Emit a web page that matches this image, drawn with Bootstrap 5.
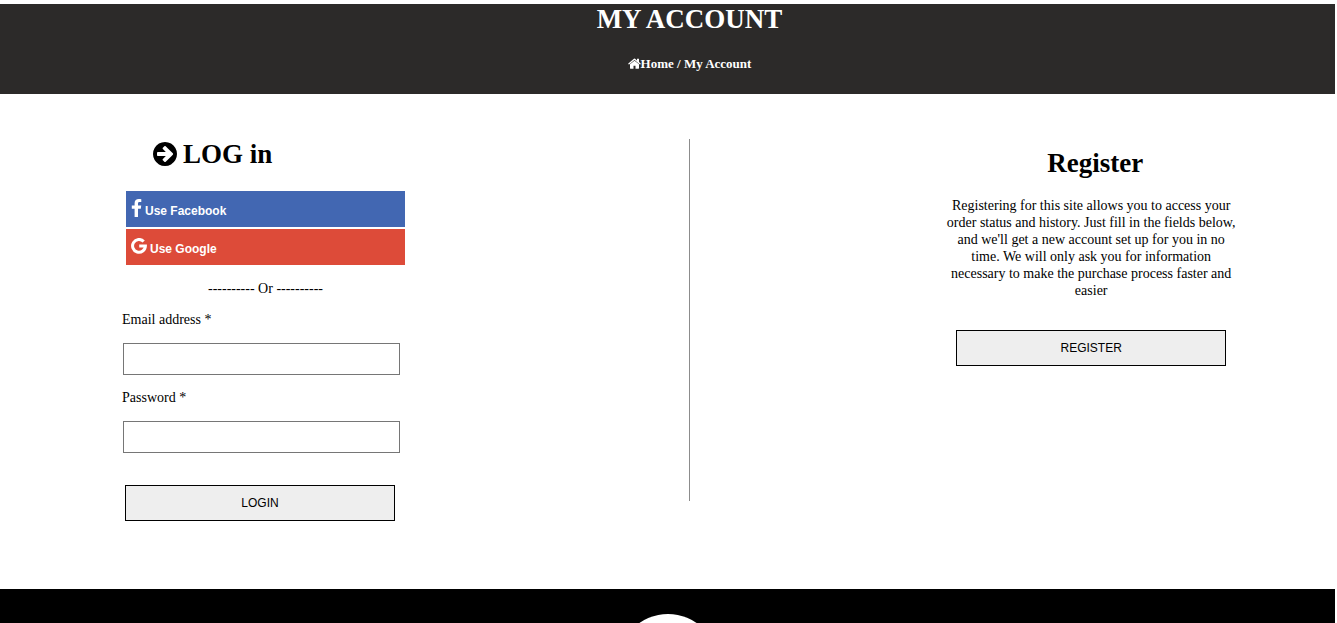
<!DOCTYPE html>
<html lang="en">
<head>
<meta charset="utf-8">
<meta name="viewport" content="width=device-width, initial-scale=1">
<title>My Account</title>
<link href="https://cdn.jsdelivr.net/npm/bootstrap@5.3.0/dist/css/bootstrap.min.css" rel="stylesheet">
<style>
  body { font-family: "Liberation Serif", "Times New Roman", serif; font-size: 14px; line-height: 17px; color: #000; background: #fff; padding: 4px 2px 0 0; }
  h1, h2 { font-size: 27px; line-height: 31px; font-weight: 700; margin: 0; }
  .page-banner { background: #2c2a29; height: 90px; padding-left: 44px; }
  .crumbs { font-size: 13px; margin-top: 20px; }
  .crumbs a { color: #fff; }
  .account-area { padding-top: 45px; min-height: 495px; }
  .login-side { flex: 0 0 52%; padding-left: 122px; padding-right: 24px; }
  .login-form { width: 283px; }
  .login-title { margin-left: 31px; margin-bottom: 21px; gap: 6px; }
  .login-title svg { margin-bottom: 2px; }
  .divider-line { width: 1px; height: 362px; background: #8c8c8c; margin-left: -5px; }
  .register-box { width: 298px; margin-left: 252px; padding-top: 9px; }
  .register-box h2 { padding-left: 8px; }
  .register-text { margin: 18px 0 31px; padding: 0 3px; }
  .btn-social, .btn-box { font-family: "Liberation Sans", Arial, sans-serif; font-size: 12px; line-height: 16px; border-radius: 0; height: 36px; }
  .btn-social { color: #fff; font-weight: 700; border: 0; text-align: left; padding: 4px 5px 0; margin: 0 0 2px 4px; width: 279px; gap: 3px; }
  .btn-social:hover { color: #fff; }
  .btn-facebook, .btn-facebook:hover { background: #4267b2; }
  .btn-google, .btn-google:hover { background: #dd4b39; }
  .btn-social svg { margin-top: -6px; }
  .btn-box { background: #eee; border: 1px solid #000; color: #000; padding: 0; width: 270px; }
  .login-button { margin: 18px 0 0 3px; }
  .or-line { margin: 15px 0 14px; padding-left: 4px; }
  .field { width: 277px; height: 32px; border: 1px solid #767676; border-radius: 0; margin: 15px 0 14px 1px; padding: 0 4px; }
  .site-footer { background: #000; min-height: 0; padding-top: 25px; }
  .footer-disc { width: 100px; height: 100px; background: #fff; }
</style>
</head>
<body class="vh-100 d-flex flex-column overflow-hidden">
<header class="page-banner text-white text-center flex-shrink-0">
  <h1>MY ACCOUNT</h1>
  <nav class="crumbs fw-bold d-flex justify-content-center align-items-center" aria-label="Breadcrumb">
    <a href="#" class="text-decoration-none d-flex align-items-center"><svg width="13" height="11" viewBox="0 0 1664 1312" fill="currentColor" aria-hidden="true"><path d="M1408 768v480q0 26-19 45t-45 19H960V928H704v384H320q-26 0-45-19t-19-45V768q0-1 .5-3t.5-3l575-474 575 474q1 2 1 6zm223-69-62 74q-8 9-21 11h-3q-13 0-21-7L832 200 140 777q-12 8-24 7-13-2-21-11l-62-74q-8-10-7-23.500t11-21.500l719-599q32-26 76-26t76 26l244 204V64q0-14 9-23t23-9h192q14 0 23 9t9 23v408l219 182q10 8 11 21.500t-7 23.500z"/></svg>Home</a><span>&nbsp;/ My Account</span>
  </nav>
</header>
<main class="account-area d-flex flex-shrink-0">
  <section class="login-side">
    <form class="login-form">
      <h2 class="login-title d-flex align-items-center"><svg width="24" height="24" viewBox="0 0 1536 1536" aria-hidden="true"><path d="M1285 768q0-27-18-45L905 361l-91-91q-18-18-45-18t-45 18l-91 91q-18 18-18 45t18 45l189 189H320q-26 0-45 19t-19 45v128q0 26 19 45t45 19h502l-189 189q-19 19-19 45t19 45l91 91q18 18 45 18t45-18l362-362 91-91q18-18 18-46zm251 0q0 209-103 385.500T1153.500 1433 768 1536t-385.500-103T103 1153.500 0 768t103-385.500T382.500 103 768 0t385.500 103T1433 382.500 1536 768z"/></svg><span>LOG in</span></h2>
      <button type="button" class="btn btn-social btn-facebook d-flex align-items-center"><svg width="11" height="18" viewBox="0 0 11 18" fill="#fff" aria-hidden="true"><path d="M10.300.2v2.900H8.600c-1.300 0-1.600.6-1.600 1.500v2h3.200l-.4 3.200H7V18H3.600V9.800H.8V6.600h2.800V4.200C3.600 1.400 5.300 0 7.800 0c1.200 0 2.200.1 2.500.2z"/></svg><span>Use Facebook</span></button>
      <button type="button" class="btn btn-social btn-google d-flex align-items-center"><svg width="16" height="16" viewBox="0 0 16 16" fill="none" stroke="#fff" stroke-width="3" aria-hidden="true"><path d="M12.700 3.500A6.400 6.400 0 1 0 14.400 8V7.900H8.200"/></svg><span>Use Google</span></button>
      <p class="or-line text-center">---------- Or ----------</p>
      <label class="d-block" for="email">Email address *</label>
      <input class="field d-block" type="email" id="email">
      <label class="d-block" for="password">Password *</label>
      <input class="field d-block" type="password" id="password">
      <button type="submit" class="btn btn-box login-button">LOGIN</button>
    </form>
  </section>
  <div class="divider-line flex-shrink-0"></div>
  <section class="register-box text-center">
    <h2>Register</h2>
    <p class="register-text">Registering for this site allows you to access your order status and history. Just fill in the fields below, and we'll get a new account set up for you in no time. We will only ask you for information necessary to make the purchase process faster and easier</p>
    <button type="button" class="btn btn-box">REGISTER</button>
  </section>
</main>
<footer class="site-footer flex-fill overflow-hidden">
  <div class="footer-disc rounded-circle mx-auto"></div>
</footer>
<script src="https://cdn.jsdelivr.net/npm/bootstrap@5.3.0/dist/js/bootstrap.bundle.min.js"></script>
</body>
</html>
